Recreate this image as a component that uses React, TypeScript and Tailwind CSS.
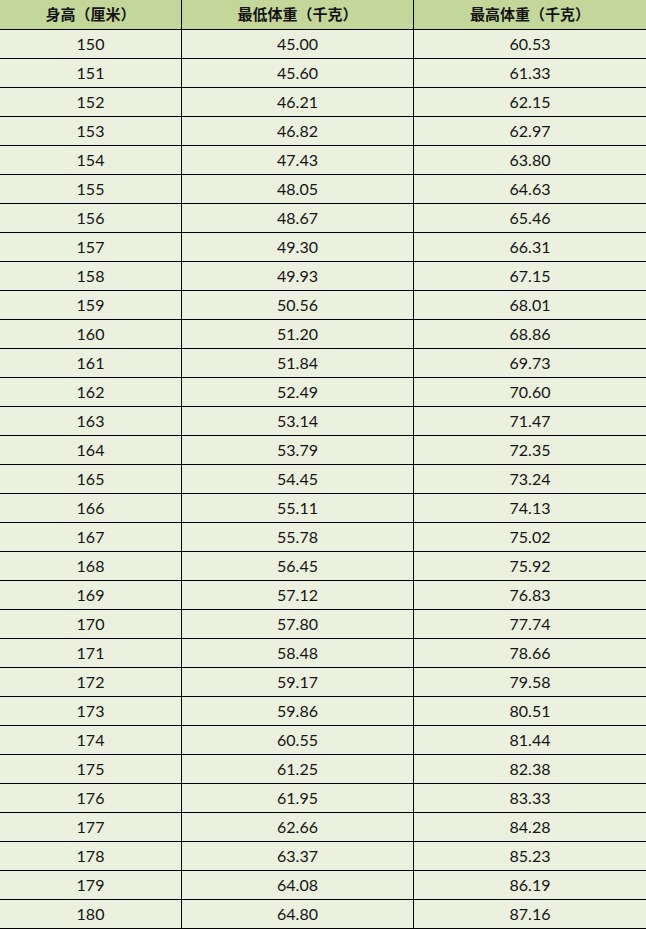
const heights = Array.from({ length: 31 }, (_, i) => 150 + i);
const minW = [
  "45.00", "45.60", "46.21", "46.82", "47.43", "48.05", "48.67", "49.30", "49.93", "50.56",
  "51.20", "51.84", "52.49", "53.14", "53.79", "54.45", "55.11", "55.78", "56.45", "57.12",
  "57.80", "58.48", "59.17", "59.86", "60.55", "61.25", "61.95", "62.66", "63.37", "64.08", "64.80",
];
const maxW = [
  "60.53", "61.33", "62.15", "62.97", "63.80", "64.63", "65.46", "66.31", "67.15", "68.01",
  "68.86", "69.73", "70.60", "71.47", "72.35", "73.24", "74.13", "75.02", "75.92", "76.83",
  "77.74", "78.66", "79.58", "80.51", "81.44", "82.38", "83.33", "84.28", "85.23", "86.19", "87.16",
];

const App = () => {
  return (
    <div className="w-[646px] h-[929px] bg-[#ebf1de] text-[#141414] overflow-hidden">
      <div className="grid grid-cols-[182px_232px_232px] h-[30px] bg-[#c4d79b] border-b border-black font-['Noto_Sans_CJK_SC',sans-serif] font-bold text-[15px]">
        <div className="flex items-center justify-center border-r border-black">身高（厘米）</div>
        <div className="flex items-center justify-center border-r border-black">最低体重（千克）</div>
        <div className="flex items-center justify-center">最高体重（千克）</div>
      </div>
      {heights.map((h, i) => (
        <div
          key={h}
          className="grid grid-cols-[182px_232px_232px] h-[29px] border-b border-black font-['Lato',sans-serif] text-[16px]"
        >
          <div className="flex items-center justify-center border-r border-black">{h}</div>
          <div className="flex items-center justify-center border-r border-black">{minW[i]}</div>
          <div className="flex items-center justify-center">{maxW[i]}</div>
        </div>
      ))}
    </div>
  );
};

export default App;
